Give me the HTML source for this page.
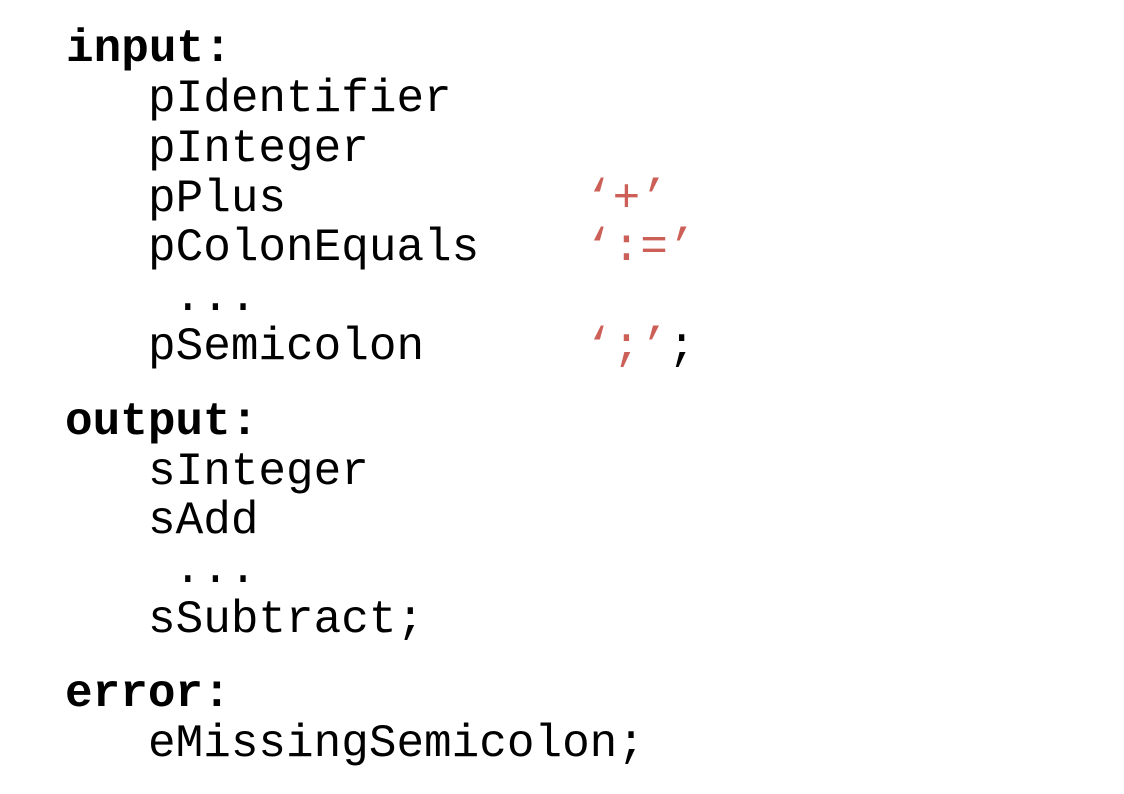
<!DOCTYPE html>
<html><head><style>
body{margin:0;width:1124px;height:794px;background:#fff;position:relative;overflow:hidden;font-family:"Liberation Mono","Courier New",monospace;font-size:46px;color:#000}
div{position:absolute;line-height:50px;white-space:pre}
b{font-weight:bold}
.r{color:#cc5f57}
</style></head><body>
<div style="left:66px;top:24px"><b>input:</b></div>
<div style="left:148px;top:74px">pIdentifier</div>
<div style="left:148px;top:124px">pInteger</div>
<div style="left:148px;top:174px">pPlus</div>
<div style="left:585px;top:174px" class="r">‘+’</div>
<div style="left:148px;top:223px">pColonEquals</div>
<div style="left:585px;top:223px" class="r">‘:=’</div>
<div style="left:174px;top:273px">...</div>
<div style="left:148px;top:322px">pSemicolon</div>
<div style="left:585px;top:322px"><span class="r">‘;’</span>;</div>
<div style="left:65px;top:397px"><b>output:</b></div>
<div style="left:148px;top:447px">sInteger</div>
<div style="left:148px;top:496px">sAdd</div>
<div style="left:174px;top:545px">...</div>
<div style="left:148px;top:595px">sSubtract;</div>
<div style="left:65px;top:669px"><b>error:</b></div>
<div style="left:148px;top:719px">eMissingSemicolon;</div>
</body></html>
